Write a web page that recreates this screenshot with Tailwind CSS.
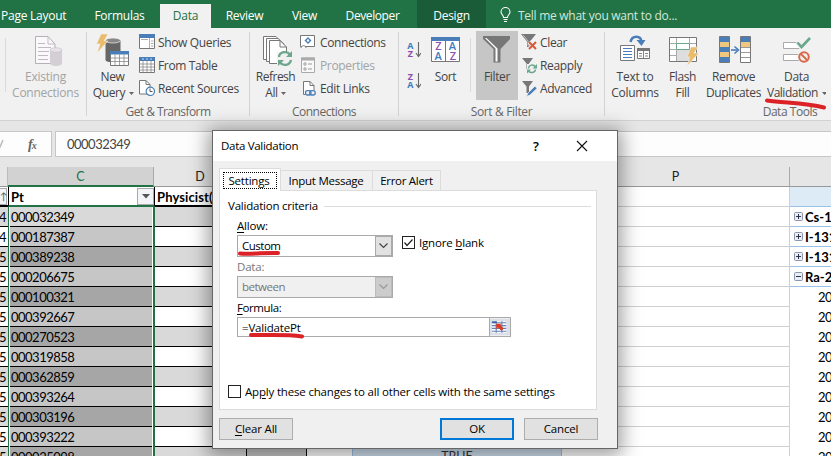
<!DOCTYPE html>
<html lang="en">
<head>
<meta charset="utf-8">
<title>Data Validation</title>
<script src="https://cdn.jsdelivr.net/npm/@tailwindcss/browser@4"></script>
</head>
<body class="relative w-[831px] h-[456px] overflow-hidden bg-[#e6e6e6] font-['Open_Sans','Noto_Sans',sans-serif] text-[12px] text-[#444] whitespace-nowrap">

<!-- Ribbon tabs -->
<nav class="flex h-7 bg-[#217346] text-white text-[12px] leading-[24px] pt-1 text-center tracking-[-0.25px]">
  <div class="w-[79px] text-left pl-[1px]">Page Layout</div>
  <div class="w-[81px]">Formulas</div>
  <div class="w-[51px] bg-[#f1f1f1] text-[#217346] font-medium">Data</div>
  <div class="w-[67px]">Review</div>
  <div class="w-[53px]">View</div>
  <div class="w-[83px] tracking-[-0.4px]">Developer</div>
  <div class="w-[72px] pl-[3px]"><div class="bg-[#1a5c38] -mt-1 pt-1 h-7">Design</div></div>
  <svg class="ml-[14px] mt-[3px] shrink-0" width="12" height="16" viewBox="501 7 12 16" fill="none" stroke="#fff" stroke-width="1.1"><path d="M504.5 17.5C504.5 15 502 14.500 502 12A4.500 4.500 0 0 1 511 12C511 14.500 508.500 15 508.500 17.500ZM504.500 19.500H508.500M505 21.500H508"/></svg>
  <div class="ml-[6px] text-[#d3e6db] tracking-[-0.27px]">Tell me what you want to do...</div>
</nav>

<!-- Ribbon -->
<section class="flex h-[93px] bg-[#f1f1f1] border-b border-[#d2d2d2] leading-4 text-center tracking-[-0.35px]">
  <div class="flex w-[87px] border-r border-[#d4d4d4] h-[84px] mt-1">
    <div class="w-[1px] ml-[5px] mt-[6px] h-[54px] bg-[#dadada]"></div>
    <div class="w-[79px] text-[#a3a3a3] tracking-[-0.25px]">
      <svg class="ml-[28px] mt-[2px] mb-[2px]" width="30" height="33" viewBox="34 34 30 33"><path d="M35.500 36.500H48L55 44V63.500H35.500Z" fill="#fbf8fb" stroke="#b5afb6"/><path d="M48 36.500V44H55M38 43.500H45M38 47.500H51M38 51.500H49M38 55.500H48M38 59.500H48" fill="none" stroke="#c0bac1"/><path d="M50 50V63C50 67 62 67 62 63V50Z" fill="#d4ced5"/><ellipse cx="56" cy="50" rx="6" ry="2.300" fill="#e7e2e8" stroke="#c4bec5" stroke-width=".6"/></svg>
      Existing<br>Connections
    </div>
  </div>
  <div class="w-[163px] border-r border-[#d4d4d4] h-[84px] mt-1">
    <div class="flex h-[71px]">
      <div class="w-[51px]">
        <svg class="ml-[8px] mb-[2px] mt-[1px]" width="36" height="34" viewBox="95 33 36 34"><path d="M105.500 40V60C105.500 63 120.500 63 120.500 60V40Z" fill="#666"/><ellipse cx="113" cy="40.500" rx="7.500" ry="2.500" fill="#888" stroke="#f1f1f1" stroke-width=".7"/><path d="M101 34H108L104 41H108L97 53L100 44H96.500Z" fill="#eabb6a" stroke="#f1f1f1" stroke-width=".6"/><path d="M110.500 51.500H128.500V65.500H110.500Z" fill="#fff" stroke="#777"/><path d="M110 51H129V54.500H110Z" fill="#4a7eb8"/><path d="M115 54.500V65M119.500 54.500V65M124 54.500V65M111 58H128M111 61.500H128" stroke="#888" stroke-width=".8"/></svg>
        <div>New</div><div class="flex items-center justify-center gap-[4px] pl-[2px]">Query<svg width="5" height="3"><path d="M0 0H5L2.500 3Z" fill="#666"/></svg></div>
      </div>
      <div class="text-left leading-[23px] -mt-px">
        <div class="flex gap-[3px] h-[23px]"><svg class="mt-[3px] ml-px" width="16" height="16" viewBox="0 0 16 16"><path d="M.5.500H15.500V14.500H.5Z" fill="#fff" stroke="#777"/><path d="M0 0H16V4H0Z" fill="#4a7eb8"/><path d="M10.500 4V14M12 7H14.500M12 9.500H14.500M12 12H14.500M2 5.500H9" stroke="#999" stroke-width=".8"/></svg>Show Queries</div>
        <div class="flex gap-[3px] h-[23px]"><svg class="mt-[3px] ml-px" width="16" height="16" viewBox="0 0 16 16"><path d="M.5.500H15.500V15.500H.5Z" fill="#fff" stroke="#777"/><path d="M0 0H16V4H0Z" fill="#4a7eb8"/><path d="M4 4V15M8 4V15M12 4V15M1 7H15M1 10H15M1 13H15" stroke="#888" stroke-width=".8"/><path d="M3 2H5M7 2H9M11 2H13" stroke="#fff" stroke-width=".7"/></svg>From Table</div>
        <div class="flex gap-[3px] h-[23px]"><svg class="mt-[3px] ml-px" width="16" height="16" viewBox="0 0 16 16"><path d="M.5.500H7L11 4.500V14H.5Z" fill="#fff" stroke="#777"/><path d="M7 .5V4.500H11" fill="none" stroke="#777"/><circle cx="11.300" cy="11.300" r="4.200" fill="#fff" stroke="#4a7eb8" stroke-width="1.200"/><path d="M11 8.500V11.500H13.500" fill="none" stroke="#555"/></svg>Recent Sources</div>
      </div>
    </div>
    <div class="text-[#666] leading-[17px] tracking-[-0.55px]">Get &amp; Transform</div>
  </div>
  <div class="w-[149px] border-r border-[#d4d4d4] h-[84px] mt-1">
    <div class="flex h-[71px]">
      <div class="w-[51px]">
        <svg class="ml-[12px] mb-[2px] mt-[1px]" width="31" height="34" viewBox="262 33 31 34"><g fill="#fff" stroke="#777"><path d="M263.500 36.500H276L281 42V59.500H263.500Z"/><path d="M266.500 38.500H278L284 44V61.500H266.500Z"/><path d="M269.500 40.500H280L286.500 47V63.500H269.500Z"/><path d="M280 40.500V47H286.500" fill="none"/></g><path d="M277 52H293V66H277Z" fill="#f1f1f1"/><g fill="none" stroke="#6ba68d" stroke-width="2.300"><path d="M279 57C279.500 51.500 287 50.500 290 54.500M291 60C290 65.500 283 66.500 280 62.500"/></g><path d="M292 51V57H286ZM278 66V60H284Z" fill="#6ba68d"/></svg>
        <div class="tracking-[-0.5px]">Refresh</div><div class="flex items-center justify-center gap-[3px]">All<svg width="5" height="3"><path d="M0 0H5L2.500 3Z" fill="#666"/></svg></div>
      </div>
      <div class="text-left leading-[23px] -mt-px -ml-px">
        <div class="flex gap-[4px] h-[23px]"><svg class="mt-[4px]" width="16" height="16" viewBox="0 0 16 16"><path d="M.5.500H14.500V11.500H.5Z" fill="#fff" stroke="#777"/><path d="M1 13C1 10 6 10 6 13" fill="#fff" stroke="#777"/><path d="M8 2L11.500 5.500L8 9L4.500 5.500Z" fill="#4a7eb8"/><circle cx="8" cy="5.500" r="1.200" fill="#fff"/></svg>Connections</div>
        <div class="flex gap-[4px] h-[23px] text-[#a3a3a3]"><svg class="mt-[3px]" width="16" height="16" viewBox="0 0 16 16"><path d="M1.500 1H14.500V15.500H1.500Z" fill="#f8f8f8" stroke="#aaa"/><path d="M1 .5H15V3.500H1Z" fill="#aaa"/><circle cx="5" cy="7" r="1.200" fill="none" stroke="#999"/><circle cx="5" cy="12" r="1.200" fill="none" stroke="#999"/><path d="M8 7H12M8 12H12" stroke="#999"/></svg>Properties</div>
        <div class="flex gap-[4px] h-[23px]"><svg class="mt-[4px]" width="16" height="16" viewBox="0 0 16 16"><path d="M3.500.5H10L14 4.500V13.500H3.500Z" fill="#fff" stroke="#777"/><path d="M10 .5V4.500H14" fill="none" stroke="#777"/><path d="M5 9H16V15H5Z" fill="#f1f1f1"/><g fill="none" stroke="#4a7eb8" stroke-width="1.300"><rect x="5.500" y="9.700" width="5.500" height="4.300" rx="2"/><rect x="9.700" y="9.700" width="5.500" height="4.300" rx="2"/></g></svg>Edit Links</div>
      </div>
    </div>
    <div class="text-[#666] leading-[17px] tracking-[-0.5px]">Connections</div>
  </div>
  <div class="w-[206px] border-r border-[#d4d4d4] h-[84px] mt-1">
    <div class="flex h-[71px]">
      <svg class="mt-[8px] ml-[8px] shrink-0" width="14" height="52" viewBox="407 40 14 52"><g font-family="Open Sans" font-size="9" font-weight="700" letter-spacing="0"><text x="407.300" y="48.800" fill="#3f7cbf">A</text><text x="407.700" y="57" fill="#8e4fb0">Z</text><text x="407.700" y="80" fill="#8e4fb0">Z</text><text x="407.300" y="88.300" fill="#3f7cbf">A</text></g><path d="M418.500 42V56M416 53L418.500 56.500L421 53M418.500 73V87M416 84L418.500 87.500L421 84" fill="none" stroke="#666" stroke-width="1.100"/></svg>
      <div class="w-[49px]">
        <svg class="ml-[10px] mb-[2px] mt-[4px]" width="30" height="31" viewBox="431 36 30 31"><path d="M431.500 37.500H459.500V61.500H431.500Z" fill="#fff" stroke="#777"/><path d="M431 37H460V41H431Z" fill="#4a7eb8"/><path d="M445.500 41V61" stroke="#777"/><g font-family="Open Sans" font-size="11" font-weight="600" letter-spacing="0"><text x="435.200" y="50.300" fill="#8e4fb0">Z</text><text x="434.600" y="60.300" fill="#3f7cbf">A</text><text x="448.800" y="50.300" fill="#3f7cbf">A</text><text x="449.700" y="60.300" fill="#8e4fb0">Z</text></g></svg>
        Sort
      </div>
      <div class="w-px h-[54px] mt-[6px] bg-[#dadada]"></div>
      <div class="w-[42px] ml-[5px] -mt-px bg-[#c6c6c6] h-[69px]">
        <svg class="ml-[6px] mb-[3px] pt-[4px]" width="30" height="35" viewBox="482 35 30 31"><path d="M483 36H510V39L500.500 49V62.500H493.500V49L483 39Z" fill="#777"/><path d="M485 38L495.500 48.500V61.500H497.500V48.500L486.500 38Z" fill="#fff"/></svg>
        Filter
      </div>
      <div class="text-left leading-[23px] -mt-px ml-[3px]">
        <div class="flex gap-[3px] h-[23px]"><svg class="mt-[3px]" width="16" height="16" viewBox="0 0 16 16"><path d="M0 0H15L9 7.500V13H6V7.500Z" fill="#777"/><path d="M2 .8L7 7V12" stroke="#ddd" stroke-width=".7" fill="none"/><path d="M8 8L15 15M15 8L8 15" stroke="#f1f1f1" stroke-width="4"/><path d="M8 8L15 15M15 8L8 15" stroke="#d9593b" stroke-width="2"/></svg>Clear</div>
        <div class="flex gap-[3px] h-[23px]"><svg class="mt-[4px]" width="16" height="16" viewBox="0 0 16 16"><path d="M1 0H12L8 5.500V11H5.500V5.500Z" fill="#777"/><path d="M6 6H16V15H6Z" fill="#f1f1f1"/><path d="M7.500 10.500C8 6.500 12.500 6 14.500 9M14.500 11.500C14 15 9.500 15.500 7.500 13" fill="none" stroke="#6ba68d" stroke-width="1.500"/><path d="M16 6V10.500H11.500ZM6 15.500V11.500H10Z" fill="#6ba68d"/></svg>Reapply</div>
        <div class="flex gap-[3px] h-[23px]"><svg class="mt-[4px]" width="16" height="16" viewBox="0 0 16 16"><path d="M1 0H12L8 5.500V12H5.500V5.500Z" fill="#777"/><path d="M14 5L16 7.500L9 14L5.500 15.500L7 12Z" fill="#4a7eb8" stroke="#f1f1f1" stroke-width=".7"/></svg>Advanced</div>
      </div>
    </div>
    <div class="text-[#666] leading-[17px]">Sort &amp; Filter</div>
  </div>
  <div class="w-[226px] mt-1">
    <div class="flex h-[71px]">
      <div class="w-[60px] tracking-[-0.25px]">
        <svg class="ml-[14px] mb-[2px] mt-[1px]" width="32" height="34" viewBox="619 33 32 34"><path d="M620.500 45.500H634.500V60.500H620.500Z" fill="#fff" stroke="#777"/><path d="M623 48.500H632M623 51.500H632M623 54.500H632M623 57.500H632" stroke="#4a7eb8"/><path d="M637.500 48.500H649.500V58.500H637.500Z" fill="#fff" stroke="#777"/><path d="M637 48H650V51H637Z" fill="#777"/><path d="M643.500 51V58M639 53.500H642M645 53.500H648M639 56H642M645 56H648" stroke="#777" stroke-width=".9"/><path d="M630.500 42C632 35 641 35 641.500 42" fill="none" stroke="#4a7eb8" stroke-width="2.500"/><path d="M636.500 40H645.500L641.500 46Z" fill="#4a7eb8"/></svg>
        Text to<br>Columns
      </div>
      <div class="w-[35px]">
        <svg class="ml-[3px] mb-[2px] mt-[1px]" width="32" height="34" viewBox="668 33 32 34"><path d="M669.500 37.500H696.500V61.500H669.500Z" fill="#fff" stroke="#777"/><path d="M676.500 38V61M689.500 38V61M670 43.500H696M670 49.500H696M670 55.500H696" stroke="#aaa"/><path d="M677 50H689V61H677Z" fill="#ddd"/><path d="M676.500 43.500H689.500V49.500H676.500Z" fill="#fff" stroke="#6ba68d"/><path d="M691 47H698L694 53H699L687 66L690 57H687Z" fill="#eabb6a" stroke="#f1f1f1" stroke-width=".6"/></svg>
        Flash<br>Fill
      </div>
      <div class="w-[67px]">
        <svg class="ml-[18px] mb-[2px] mt-[1px]" width="34" height="34" viewBox="717 33 34 34"><path d="M718.500 36.500H728.500V62.500H718.500Z" fill="#4a7eb8" stroke="#777"/><path d="M719 42H728V47H719ZM719 52H728V57H719Z" fill="#efc77f"/><path d="M739.500 36.500H749.500V62.500H739.500Z" fill="#fff" stroke="#777"/><path d="M740 37H749V42H740Z" fill="#4a7eb8"/><path d="M740 42H749V47H740Z" fill="#efc77f"/><path d="M740 47.500H749M740 52.500H749M740 57.500H749" stroke="#999"/><path d="M730 50H736" stroke="#4a7eb8" stroke-width="1.600"/><path d="M733.500 46.500L737.500 50L733.500 53.500" fill="none" stroke="#4a7eb8" stroke-width="1.600"/></svg>
        Remove<br>Duplicates
      </div>
      <div class="w-[64px]">
        <svg class="ml-[15px] mb-[2px] mt-[1px]" width="30" height="34" viewBox="781 33 30 34"><path d="M782.500 42.500H799V48.500H782.500ZM782.500 54.500H799V60.500H782.500Z" fill="#fff" stroke="#aaa"/><path d="M796 42L800.500 47.500L809 38" fill="none" stroke="#f1f1f1" stroke-width="5"/><path d="M796.500 42.500L800.500 47L809 38" fill="none" stroke="#6ba68d" stroke-width="2.600"/><circle cx="803" cy="57" r="6.500" fill="#f1f1f1"/><circle cx="803" cy="57" r="4.800" fill="#f1f1f1" stroke="#d9694b" stroke-width="2"/><path d="M799.500 53.500L806.500 60.500" stroke="#d9694b" stroke-width="2"/></svg>
        <div class="pr-[5px]">Data</div><div class="flex items-center justify-center gap-[4px] pr-[5px] tracking-[-0.5px]">Validation<svg width="5" height="3"><path d="M0 0H5L2.500 3Z" fill="#666"/></svg></div>
      </div>
    </div>
    <div class="text-[#666] leading-[17px] pl-[144px] tracking-[-0.45px]">Data Tools</div>
  </div>
</section>

<!-- Formula bar -->
<section class="flex gap-[3px] h-[26px] mt-[10px]">
  <div class="w-[52px] bg-[#fdfdfd] border border-l-0 border-[#c6c6c6] flex items-center"><svg width="8" height="12" class="-ml-[3px]"><path d="M1 8L3 9L6 2" fill="none" stroke="#bbb" stroke-width="1.500"/></svg><span class="ml-[23px] font-['Liberation_Serif',serif] italic font-bold text-[14px] text-[#666]">f<span class="text-[10px] -ml-px">x</span></span></div>
  <div class="flex-1 bg-[#fdfdfd] border border-r-0 border-[#c6c6c6] pl-[11px] leading-[25px] font-['Lato',sans-serif] text-[13px] tracking-[-0.5px]">000032349</div>
</section>

<!-- Column headers -->
<section class="flex h-[30px] pt-[10px] border-b border-[#999] leading-[19px] text-center text-[#222] font-['Lato',sans-serif] text-[12.5px]">
  <div class="w-2 border-r border-[#bbb]"></div>
  <div class="w-[146px] h-[20px] bg-[#d2d2d2] border-b-2 border-[#217346] border-r border-r-[#aaa] text-[#217346]">C</div>
  <div class="w-[92px]">D</div>
  <div class="w-[316px]"></div>
  <div class="w-[228px] border-r border-[#aaa]">P</div>
</section>

<!-- Cells -->
<section class="flex h-[269px] bg-white text-black font-['Lato',sans-serif] text-[13px] tracking-[-0.5px] leading-[20px]">
  <div class="w-2 shrink-0" id="colB"></div>
  <div class="w-[147px] shrink-0" id="colC"></div>
  <div class="w-[92px] shrink-0" id="colD"></div>
  <div class="w-[315px] shrink-0 flex flex-col justify-end">
    <div class="flex h-[9px] text-center text-[#333]"><div class="w-[60px] bg-[#c6c6c6] border-r border-black"></div><div class="w-[45px]"></div><div class="w-[210px] bg-[#cfdfee] border-x border-[#9bc2e6] leading-[19px] overflow-hidden tracking-normal text-[12.5px]">TRUE</div></div>
  </div>
  <div class="w-[228px] shrink-0 border-r border-[#d0d0d0]" id="colP"></div>
  <div class="w-[41px] shrink-0" id="colQ"></div>
</section>

<!-- Dialog -->
<div class="absolute left-[212px] top-[130px] w-[406px] h-[319px] bg-[#f0f0f0] border border-[#666] shadow-[0_3px_18px_4px_rgba(0,0,0,0.38)] text-black text-[11.5px] tracking-[-0.18px]">
  <header class="h-[30px] bg-white flex items-center pl-[8px] leading-[30px]">
    <span class="w-[312px] tracking-[-0.3px]">Data Validation</span><span class="w-[42px] text-[13px] font-semibold">?</span>
    <svg width="12" height="12" class="ml-[1px]"><path d="M1 1L11 11M11 1L1 11" stroke="#111" stroke-width="1.100"/></svg>
  </header>
  <div class="flex items-end h-[29px] pl-[6px]">
    <div class="relative z-10 w-[62px] h-[23px] -mb-px bg-white border border-b-0 border-[#dcdcdc] p-[3px]"><div class="border border-dotted border-black h-[17px] leading-[15px] text-center pr-[2px] tracking-[-0.2px]">Settings</div></div>
    <div class="w-[92px] h-[20px] border-t border-r border-[#dcdcdc] leading-[20px] text-center pr-[1px] tracking-[-0.25px]">Input Message</div>
    <div class="w-[68px] h-[20px] border-t border-r border-[#dcdcdc] leading-[20px] text-center tracking-[-0.3px]">Error Alert</div>
  </div>
  <main class="ml-[6px] w-[378px] h-[220px] bg-white border border-[#dcdcdc] pl-[8px] pt-[6px]">
    <div class="flex items-center gap-[6px] leading-[18px]"><span class="w-[90px] tracking-[-0.22px]">Validation criteria</span><i class="h-px w-[267px] bg-[#dcdcdc]"></i></div>
    <div class="pl-[9px]">
      <div class="leading-[18px] mt-[2px]"><u class="underline-offset-2">A</u>llow:</div>
      <div class="flex">
        <div class="flex w-[156px] h-[22px] border border-[#aaa] leading-[20px] pl-[4px]"><span class="flex-1 tracking-[-0.5px]">Custom</span><div class="w-[17px] bg-[#e1e1e1] border border-[#aaa] flex items-center justify-center"><svg width="9" height="6"><path d="M.5.500L4.500 4.500L8.500.5" fill="none" stroke="#444" stroke-width="1.200"/></svg></div></div>
        <div class="ml-[9px] mt-px w-[13px] h-[13px] border border-[#222]"><svg width="11" height="11"><path d="M1.500 5.500L4 8.500L9.500 2.500" fill="none" stroke="#222" stroke-width="1.200"/></svg></div>
        <div class="ml-[4px] leading-[15px]">Ignore <u class="underline-offset-2">b</u>lank</div>
      </div>
      <div class="leading-[17px] mt-[1px] mb-[1px] text-[#777]">Data:</div>
      <div class="flex w-[156px] h-[22px] border border-[#aaa] bg-[#f0f0f0] leading-[20px] pl-[4px] text-[#777]"><span class="flex-1 tracking-[-0.5px]">between</span><div class="w-[17px] bg-[#ccc] border border-[#bbb] flex items-center justify-center"><svg width="9" height="6"><path d="M.5.500L4.500 4.500L8.500.5" fill="none" stroke="#999" stroke-width="1.200"/></svg></div></div>
      <div class="leading-[18px] mt-[1px] tracking-[-0.4px]"><u class="underline-offset-2">F</u>ormula:</div>
      <div class="flex w-[274px] h-[20px] border border-[#aaa] leading-[20px] pl-[4px]"><span class="flex-1">=ValidatePt</span><svg class="border-l border-[#aaa]" width="21" height="18" viewBox="0 0 21 18"><path d="M0 0H21V18H0Z" fill="#dcdfe6"/><path d="M2 3H17V15H2Z" fill="#fff"/><path d="M2 4.500H17M2 7.500H17M2 10.500H17M2 13.500H17M6.500 3V15M12.500 3V15" stroke="#6580b5" stroke-width="1.200"/><path d="M2 3H7V5H2Z" fill="#3e62a8"/><path d="M6.500 5.500H12L10.800 7L14.500 10.500L12 13L8.300 9.500L6.500 11Z" fill="#dc3b22"/></svg></div>
    </div>
    <div class="flex mt-[48px] gap-[4px] leading-[14px]"><div class="w-[13px] h-[13px] border border-[#222]"></div><span>Ap<u class="underline-offset-2">p</u>ly these changes to all other cells with the same settings</span></div>
  </main>
  <footer class="flex mt-[8px] pl-[6px] leading-[20px] text-center">
    <div class="w-[74px] h-[22px] bg-[#e1e1e1] border border-[#adadad]"><u class="underline-offset-2">C</u>lear All</div>
    <div class="ml-[147px] w-[74px] h-[22px] bg-[#e1e1e1] border-2 border-[#0078d7] leading-[18px]">OK</div>
    <div class="ml-[10px] w-[74px] h-[22px] bg-[#e1e1e1] border border-[#adadad]">Cancel</div>
  </footer>
</div>

<!-- Red pen marks -->
<svg class="absolute inset-0 pointer-events-none" width="831" height="456" fill="none" stroke="#dc2127" stroke-linecap="round"><path d="M767 100.500C785 103 805 103 824 107.500" stroke-width="4"/><path d="M240 253.500C252 254.500 265 252.500 278 253" stroke-width="4"/><path d="M251 335C265 335.500 285 334 302 336.500" stroke-width="4"/></svg>

<script>
const ids = ['000032349','000187387','000389238','000206675','000100321','000392667','000270523','000319858','000362859','000393264','000303196','000393222','000025098'];
const q = ['Cs-1','I-131','I-131','Ra-2'];
const put = (id, html) => document.getElementById(id).innerHTML = html;
const band = i => i % 2 ? 'bg-white' : 'bg-[#d9d9d9]';
put('colB', '<div class="h-[20px] border-b-2 border-black overflow-hidden"><div class="w-[7px] h-[17px] mt-px border border-l-0 border-[#aaa] bg-[#f3f4f7] leading-[14px] text-[10px] text-[#555]">↑</div></div>'
  + ids.map((v, i) => `<div class="h-[20px] border-b border-black overflow-hidden ${band(i)}"><span class="-ml-px">${i < 2 ? 4 : 5}</span></div>`).join(''));
put('colC', '<div class="flex h-[20px] border-b-2 border-[#217346] border-x border-x-black font-bold pl-[2px] tracking-normal"><span class="flex-1">Pt</span><div class="w-[17px] h-[17px] mt-px border border-[#aaa] bg-[#f3f4f7] flex items-center justify-center"><svg width="8" height="5"><path d="M0 0H8L4 4.500Z" fill="#555"/></svg></div></div>'
  + ids.map((v, i) => `<div class="h-[20px] border-l-[1.5px] border-r-2 border-[#217346]"><div class="h-[20px] border-x border-white"><div class="h-[20px] border-b border-black pl-[1px] ${i === 0 ? 'bg-[#d9d9d9]' : i % 2 ? 'bg-[#c6c6c6]' : 'bg-[#a6a6a6]'}">${v}</div></div></div>`).join(''));
put('colD', '<div class="h-[20px] border-b-2 border-black font-bold pl-[2px] text-[13px] tracking-[0.1px]">Physicist(s)</div>'
  + ids.map((v, i) => `<div class="h-[20px] border-b border-r border-black ${band(i)}"></div>`).join(''));
put('colP', Array(14).fill('<div class="h-[20px] border-b border-[#d0d0d0]"></div>').join(''));
put('colQ', '<div class="h-[20px] bg-[#ddebf7] border-b border-[#9bc2e6]"></div>'
  + ids.map((v, i) => i < 4
    ? `<div class="flex items-center h-[20px] border-b border-[#9bc2e6] pl-[4px] gap-[2px] font-bold tracking-normal overflow-hidden"><svg class="shrink-0" width="9" height="9"><rect x=".5" y=".5" width="8" height="8" rx="1" fill="#e9edf5" stroke="#8a96aa"/><path d="${i < 3 ? 'M2 4.500H7M4.500 2V7' : 'M2 4.500H7'}" stroke="#334"/></svg>${q[i]}</div>`
    : '<div class="h-[20px] pl-[28px] overflow-hidden">20</div>').join(''));
</script>
</body>
</html>
